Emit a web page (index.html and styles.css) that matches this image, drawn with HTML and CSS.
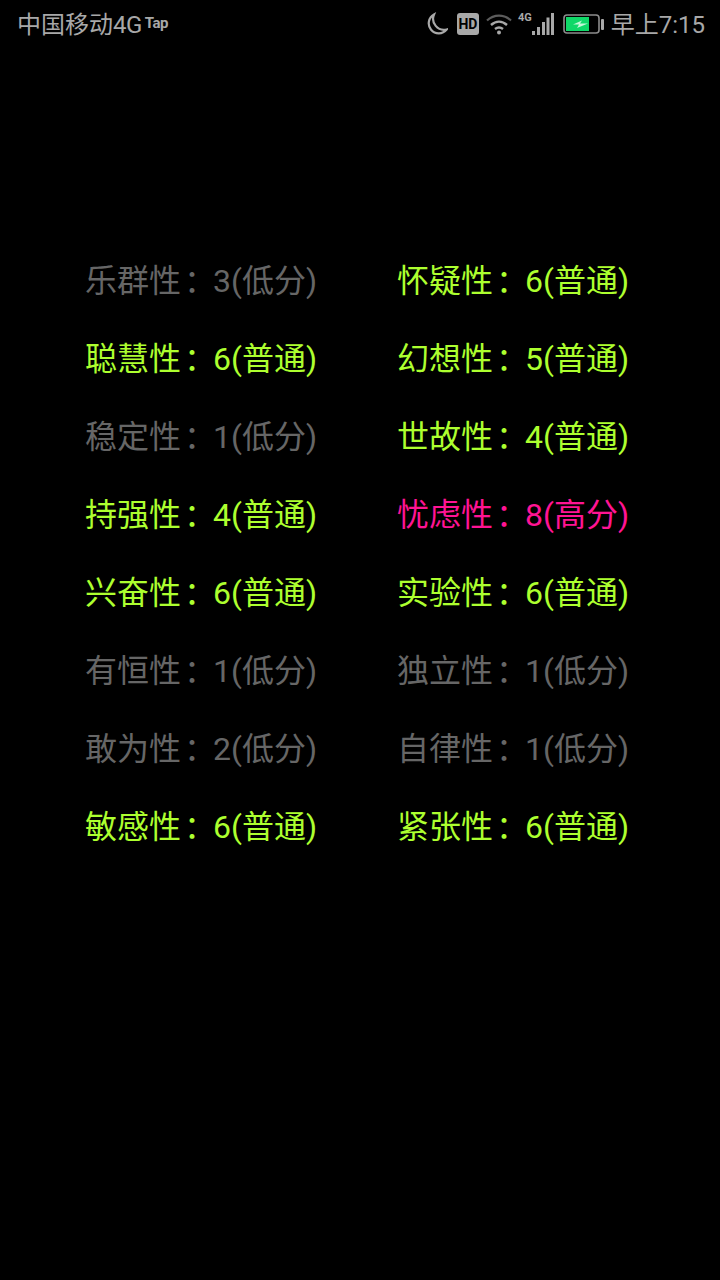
FILE: index.html
```html
<!DOCTYPE html>
<html lang="zh-CN">
<head>
    <meta charset="UTF-8">
    <meta name="viewport" content="width=device-width, initial-scale=1.0">
    <title>人格因素</title>
    <link rel="stylesheet" href="styles.css">
</head>
<body>

    <div class="status-bar">
        <div class="status-left">
            <span class="carrier">中国移动<span class="net">4G</span></span>
            <span class="tap">Tap</span>
        </div>
        <div class="status-right">
            <svg class="icon-moon" width="24" height="24" viewBox="0 0 24 24">
                <path d="M10 2.500A10 10 0 1 0 22.600 17.500 A11 11 0 0 1 10 2.500Z" fill="none" stroke="#a8a8a8" stroke-width="2.200"/>
            </svg>
            <span class="hd">HD</span>
            <svg class="icon-wifi" width="26" height="22" viewBox="0 0 26 22">
                <path d="M1 7.500C8 1 18 1 25 7.500" fill="none" stroke="#5c5c5c" stroke-width="2.200"/>
                <path d="M5 12C10 7.500 16 7.500 21 12" fill="none" stroke="#a8a8a8" stroke-width="2.400"/>
                <path d="M9 16C11.500 14 14.500 14 17 16" fill="none" stroke="#a8a8a8" stroke-width="2.400"/>
                <circle cx="13" cy="19.500" r="2" fill="#a8a8a8"/>
            </svg>
            <div class="signal">
                <span class="signal-label">4G</span>
                <svg width="22" height="24" viewBox="0 0 22 24">
                    <rect x="0" y="19" width="3" height="4" fill="#a8a8a8"/>
                    <rect x="5" y="15" width="3" height="8" fill="#a8a8a8"/>
                    <rect x="10" y="10" width="3" height="13" fill="#a8a8a8"/>
                    <rect x="14.500" y="5.500" width="3" height="17.500" fill="#a8a8a8"/>
                    <rect x="19" y="1" width="3" height="22" fill="#a8a8a8"/>
                </svg>
            </div>
            <svg class="icon-battery" width="41" height="20" viewBox="0 0 41 20">
                <rect x="1" y="1" width="35" height="18" rx="3" fill="none" stroke="#8c8c8c" stroke-width="1.600"/>
                <rect x="3" y="3" width="23" height="14" fill="#0fd868"/>
                <path d="M10 10.500L19 6.500L17 9.500L25 9.500L14 14L16 10.500Z" fill="#c4f5d8"/>
                <rect x="38" y="5" width="3" height="11" rx="1" fill="#a8a8a8"/>
            </svg>
            <span class="clock">早上7:15</span>
        </div>
    </div>

    <div class="factors">
        <div class="factor low"><span class="name">乐群性<span class="colon">：</span></span>3(低分)</div>
        <div class="factor normal"><span class="name">怀疑性<span class="colon">：</span></span>6(普通)</div>
        <div class="factor normal"><span class="name">聪慧性<span class="colon">：</span></span>6(普通)</div>
        <div class="factor normal"><span class="name">幻想性<span class="colon">：</span></span>5(普通)</div>
        <div class="factor low"><span class="name">稳定性<span class="colon">：</span></span>1(低分)</div>
        <div class="factor normal"><span class="name">世故性<span class="colon">：</span></span>4(普通)</div>
        <div class="factor normal"><span class="name">持强性<span class="colon">：</span></span>4(普通)</div>
        <div class="factor high"><span class="name">忧虑性<span class="colon">：</span></span>8(高分)</div>
        <div class="factor normal"><span class="name">兴奋性<span class="colon">：</span></span>6(普通)</div>
        <div class="factor normal"><span class="name">实验性<span class="colon">：</span></span>6(普通)</div>
        <div class="factor low"><span class="name">有恒性<span class="colon">：</span></span>1(低分)</div>
        <div class="factor low"><span class="name">独立性<span class="colon">：</span></span>1(低分)</div>
        <div class="factor low"><span class="name">敢为性<span class="colon">：</span></span>2(低分)</div>
        <div class="factor low"><span class="name">自律性<span class="colon">：</span></span>1(低分)</div>
        <div class="factor normal"><span class="name">敏感性<span class="colon">：</span></span>6(普通)</div>
        <div class="factor normal"><span class="name">紧张性<span class="colon">：</span></span>6(普通)</div>
    </div>

</body>
</html>
```

FILE: styles.css
```css
html, body {
    margin: 0;
    padding: 0;
}

body {
    width: 720px;
    height: 1280px;
    overflow: hidden;
    background-color: #000;
    font-family: Roboto, "Noto Sans CJK SC", sans-serif;
}

.status-bar {
    height: 48px;
    display: flex;
    justify-content: space-between;
    align-items: center;
    padding: 0 15px 2px 17px;
    color: #a8a8a8;
}

.status-left, .status-right {
    display: flex;
    align-items: center;
}

.carrier {
    font-size: 24px;
    margin-bottom: 4px;
}

.net {
    letter-spacing: -0.5px;
}

.tap {
    font-size: 15px;
    font-weight: 700;
    letter-spacing: -0.5px;
    margin: 0 0 2px 3px;
}

.icon-moon {
    margin-right: 9px;
}

.hd {
    width: 22px;
    height: 22px;
    border-radius: 3px;
    background-color: #a8a8a8;
    color: #000;
    font-size: 14px;
    font-weight: 700;
    line-height: 22px;
    text-align: center;
    margin-right: 7px;
}

.icon-wifi {
    margin-right: 6px;
}

.signal {
    display: flex;
    align-items: flex-start;
    margin-right: 9px;
}

.signal-label {
    font-size: 11px;
    font-weight: 700;
    line-height: 12px;
}

.icon-battery {
    margin-right: 7px;
}

.clock {
    font-size: 24px;
    margin-bottom: 4px;
}

.factors {
    display: grid;
    grid-template-columns: 313px 1fr;
    grid-auto-rows: 78px;
    padding: 192px 0 0 85px;
}

.factor {
    font-size: 32px;
    line-height: 78px;
    white-space: nowrap;
}

.factor:nth-child(even) {
    margin-left: -1px;
}

.name {
    display: inline-block;
    width: 128px;
}

.colon {
    margin-left: 3px;
    margin-right: -3px;
}

.low {
    color: #666;
}

.normal {
    color: #adff2f;
}

.high {
    color: #ff1493;
}
```
